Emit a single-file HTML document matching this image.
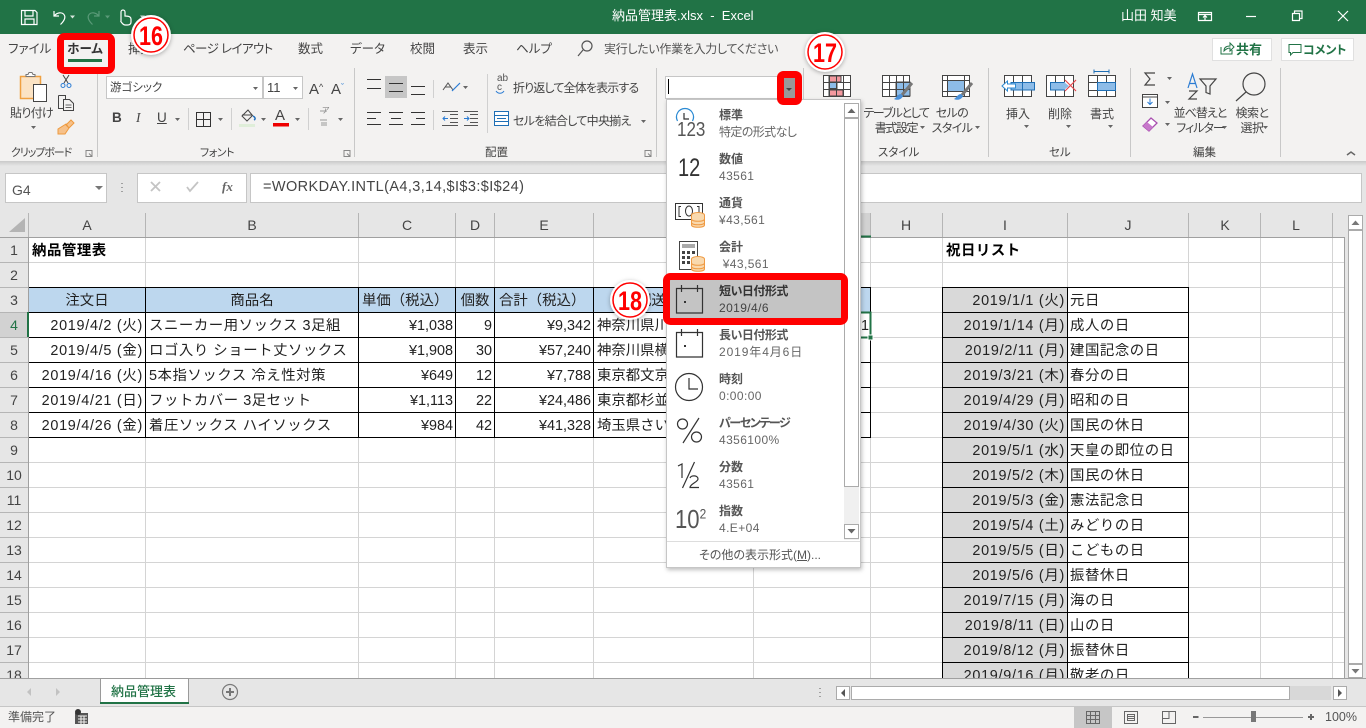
<!DOCTYPE html>
<html lang="ja"><head><meta charset="utf-8"><title>納品管理表.xlsx - Excel</title>
<style>
html,body{margin:0;padding:0;width:1366px;height:728px;overflow:hidden;background:#fff}
body{position:relative;font-family:"Liberation Sans","Noto Sans CJK JP",sans-serif;color:#444}
div,span,svg{position:absolute}
svg{left:0;top:0}
.t{white-space:nowrap;font-size:12px;line-height:16px;font-feature-settings:"palt";color:#444}
.c{text-align:center;transform:translateX(-50%)}
.r{left:0;width:1366px;height:25px}
.r span{white-space:nowrap;font-size:14.4px;line-height:25px;color:#222;top:2px}
.r span[style*="right:1223px"],.r span[style*="right:301px"]{letter-spacing:.72px}
.r span[style*="left:149px"],.r span[style*="left:1070px"],.r span[style*="left:32px"],.r span[style*="left:946px"]{letter-spacing:.55px}
.m b,.m i{position:absolute;left:52px;white-space:nowrap;font-style:normal;font-size:12px;line-height:16px;color:#555;font-feature-settings:"palt"}
.m b{top:6px;font-weight:bold}
.m i{top:23px;color:#666;letter-spacing:.4px}
.m{left:0;width:195px;height:44px}
.h{font-size:14px;color:#444;line-height:24px;top:213px;white-space:nowrap;transform:translateX(-50%)}
.n{font-size:14px;color:#444;line-height:25px;left:0;width:28px;text-align:center;margin-top:1px}
</style></head><body>
<!-- chrome backgrounds -->
<div style="left:0;top:0;width:1366px;height:34px;background:#217346"></div>
<div style="left:0;top:34px;width:1366px;height:127px;background:#f3f2f1"></div>
<div style="left:0;top:161px;width:1366px;height:52px;background:#e6e6e6"></div>
<div style="left:0;top:161px;width:1366px;height:5px;background:linear-gradient(#c9c9c9,#e6e6e6)"></div>
<div style="left:5px;top:173px;width:100px;height:28px;background:#fff;border:1px solid #c6c6c6"></div>
<div style="left:137px;top:173px;width:108px;height:28px;background:#fff;border:1px solid #c6c6c6"></div>
<div style="left:250px;top:173px;width:1110px;height:28px;background:#fff;border:1px solid #c6c6c6"></div>

<svg width="1366" height="728" viewBox="0 0 1366 728" fill="none">
<!-- grid -->
<rect x="0" y="213" width="1344" height="24" fill="#e6e6e6"/>
<rect x="0" y="237" width="28" height="441" fill="#e6e6e6"/>
<rect x="1344" y="213" width="22" height="465" fill="#e6e6e6"/>
<rect x="29" y="288" width="841" height="24" fill="#bdd7ee"/>
<rect x="943" y="288" width="124" height="390" fill="#d9d9d9"/>
<rect x="0" y="312" width="28" height="25" fill="#d2d2d2"/>
<rect x="753" y="213" width="117" height="24" fill="#d2d2d2"/>
<g stroke="#d4d4d4" stroke-width="1">
<path d="M28.5 262.5H1344M28.5 287.5H1344M28.5 312.5H1344M28.5 337.5H1344M28.5 362.5H1344M28.5 387.5H1344M28.5 412.5H1344M28.5 437.5H1344M28.5 462.5H1344M28.5 487.5H1344M28.5 512.5H1344M28.5 537.5H1344M28.5 562.5H1344M28.5 587.5H1344M28.5 612.5H1344M28.5 637.5H1344M28.5 662.5H1344"/>
<path d="M145.5 237V678M358.5 237V678M455.5 237V678M494.5 237V678M593.5 237V678M753.5 237V678M870.5 237V678M942.5 237V678M1067.5 237V678M1188.5 237V678M1260.5 237V678M1332.5 237V678"/>
</g>
<g stroke="#b5b5b5"><path d="M28.5 213V237M145.5 213V237M358.5 213V237M455.5 213V237M494.5 213V237M593.5 213V237M753.5 213V237M870.5 213V237M942.5 213V237M1067.5 213V237M1188.5 213V237M1260.5 213V237M1332.5 213V237"/>
<path d="M0 262.5H28M0 287.5H28M0 312.5H28M0 337.5H28M0 362.5H28M0 387.5H28M0 412.5H28M0 437.5H28M0 462.5H28M0 487.5H28M0 512.5H28M0 537.5H28M0 562.5H28M0 587.5H28M0 612.5H28M0 637.5H28M0 662.5H28"/></g>
<path d="M0 237.5H1344M28.5 237V678M1344.5 237V678" stroke="#a0a0a0"/>
<path d="M25 218V232H9Z" fill="#b4b4b4"/>
<!-- black tables -->
<g stroke="#000">
<path d="M29 287.5H870M29 312.5H870M29 337.5H870M29 362.5H870M29 387.5H870M29 412.5H870M29 437.5H870"/>
<path d="M145.5 287V438M358.5 287V438M455.5 287V438M494.5 287V438M593.5 287V438M870.5 287V438"/>
<path d="M942.5 287V678M1067.5 287V678M1188.5 287V678"/>
<path d="M942 287.5H1189M942 312.5H1189M942 337.5H1189M942 362.5H1189M942 387.5H1189M942 412.5H1189M942 437.5H1189M942 462.5H1189M942 487.5H1189M942 512.5H1189M942 537.5H1189M942 562.5H1189M942 587.5H1189M942 612.5H1189M942 637.5H1189M942 662.5H1189"/>
</g>
<!-- selection -->
<rect x="753" y="312.5" width="117.5" height="25" stroke="#217346" stroke-width="2"/>
<rect x="868" y="335" width="5" height="5" fill="#217346" stroke="#fff"/>
<path d="M28 312V337" stroke="#217346" stroke-width="2"/>
<path d="M753 236.5H871" stroke="#217346" stroke-width="2"/>
<!-- v scrollbar -->
<rect x="1348.5" y="215.5" width="14" height="14" fill="#fff" stroke="#ababab"/>
<rect x="1348.5" y="230.5" width="14" height="433" fill="#fff" stroke="#ababab"/>
<rect x="1348.5" y="664.5" width="14" height="13" fill="#fff" stroke="#ababab"/>
<path d="M1351.5 225H1359.5L1355.5 220.5Z" fill="#777"/><path d="M1351.5 669H1359.5L1355.5 673.5Z" fill="#777"/>
<!-- bottom bar -->
<rect x="0" y="678" width="1366" height="28" fill="#e6e6e6"/>
<path d="M0 678.5H1366" stroke="#a0a0a0"/><path d="M0 706.5H1366" stroke="#c6c6c6"/>
<rect x="0" y="707" width="1366" height="21" fill="#f3f2f1"/>
<rect x="100.5" y="678.5" width="88" height="25" fill="#fff" stroke="#9a9a9a"/>
<path d="M100 703H189" stroke="#217346" stroke-width="2"/>
<path d="M31 688V696L27 692Z" fill="#c2c2c2"/><path d="M56 688V696L60 692Z" fill="#c2c2c2"/>
<circle cx="230" cy="692" r="7.5" stroke="#7a7a7a" stroke-width="1.2"/><path d="M226 692H234M230 688V696" stroke="#777" stroke-width="2"/>
<path d="M820 688V689M820 692V693M820 696V697" stroke="#888" stroke-width="1.5"/>
<rect x="836.5" y="686.5" width="13" height="13" fill="#fff" stroke="#ababab"/><path d="M845 689V697L841 693Z" fill="#555"/>
<rect x="851.5" y="686.5" width="438" height="13" fill="#fff" stroke="#ababab"/>
<rect x="1290" y="686" width="41" height="14" fill="#d8d8d8"/>
<rect x="1333.5" y="686.5" width="13" height="13" fill="#fff" stroke="#ababab"/><path d="M1338 689V697L1342 693Z" fill="#555"/>
<!-- status icons -->
<path d="M75 713h13v11h-13z" fill="#555"/><circle cx="78" cy="712" r="3" fill="#333"/>
<path d="M78 716H87M78 719H87M78 722H87M81 716V724M84 716V724" stroke="#f3f2f1"/>
<rect x="1074" y="707" width="38" height="21" fill="#c6c6c6"/>
<path d="M1086.5 711.5h13v12h-13zM1090.5 711.5v12M1095.5 711.5v12M1086.5 715.5h13M1086.5 719.5h13" stroke="#666"/>
<path d="M1124.5 711.5h13v12h-13zM1127.5 714.5h7v6h-7zM1128 716.5h6M1128 718.5h6" stroke="#666"/>
<path d="M1162.5 711.5h13v12h-13zM1162.5 718.5h6.5v-7" stroke="#666"/>
<path d="M1193 717H1198.5" stroke="#666" stroke-width="2"/>
<path d="M1203 717.5H1303" stroke="#999"/>
<rect x="1251" y="711" width="5" height="11" fill="#777"/>
<path d="M1308 717H1314M1311 714V720" stroke="#666" stroke-width="2"/>

<!-- title icons -->
<g stroke="#fff" stroke-width="1.2">
<path d="M21.5 10.5h13.5l2 2v12h-15.5zM25 10.5v5.5h8v-5.5M25 24.5v-5.5h9v5.5"/>
<path d="M54 11v5h5M54.5 15.5c3-3 7-3.5 9-1.500 2.500 2.500 1.500 6-3 10.500"/>
<path d="M1198.500 12.500h13v8h-13zM1198.500 14.500h13M1205 20v-4M1203 17.500l2-2 2 2"/>
<path d="M1246 16.500h10"/>
<path d="M1292.500 13.500h7v7h-7zM1294.500 13v-2h7.500v7.500h-2"/>
<path d="M1338 11l10 10M1348 11l-10 10"/>
</g>
<path d="M70 15.500h5l-2.500 3zM140 15.500h5l-2.500 3" fill="#d8e6dd"/>
<path d="M105 15.500h5l-2.500 3" fill="#5a9a78"/>
<g stroke="#5a9a78" stroke-width="1.2"><path d="M99 11v5h-5M98.500 15.500c-3-3-7-3.500-9-1.500-2.500 2.500-1.500 6 3 10.500"/></g>
<path d="M121 21v-9a2 2 0 0 1 4 0v4c3 0 6 .5 6 3v3c0 2-1.500 3-3.500 3h-2.500c-2 0-3-2-4.500-4" stroke="#fff" stroke-width="1.200"/>

<!-- ribbon separators -->
<path d="M97.500 68V157M354.500 68V157M656.500 68V157M803.500 68V157M988.500 68V157M1130.500 68V157M1280.500 68V157" stroke="#c8c8c8"/>
<path d="M487.500 74V133M433.500 80V98M433.500 110V130M188.500 108V130M231.500 108V130M308.500 108V130" stroke="#d0d0d0"/>
<!-- clipboard -->
<rect x="20.500" y="76.500" width="20" height="22" fill="#fbe3c4" stroke="#f0a040" stroke-width="1.500"/>
<path d="M26 76.500h9v-2h-2l-1-2h-3l-1 2h-2z" fill="#fff" stroke="#777"/>
<rect x="33.500" y="84.500" width="13" height="17" fill="#fff" stroke="#444"/>
<path d="M63 75l5 8M69 75l-5 8" stroke="#444"/><circle cx="63" cy="85.500" r="2" stroke="#2b7cd3"/><circle cx="69" cy="85.500" r="2" stroke="#2b7cd3"/>
<path d="M58.500 95.500h7v4M58.500 95.500v13h4.500M63.500 99.500h6l4 4v7h-10z" stroke="#444"/><path d="M65.500 105h6M65.500 107.500h6" stroke="#666"/>
<path d="M66 125l5-5 3 3-5 5zM58 129l8-5 3 4-4 6h-7z" fill="#f6c18a" stroke="#ee9a3e"/>
<!-- font boxes -->
<rect x="106.500" y="76.500" width="156" height="22" fill="#fff" stroke="#c6c6c6"/>
<rect x="263.500" y="76.500" width="39" height="22" fill="#fff" stroke="#c6c6c6"/>
<path d="M253 87h5l-2.500 3zM293 87h5l-2.500 3" fill="#666"/>
<path d="M31 126h5l-2.500 3zM175 118h5l-2.500 3zM218 118h5l-2.500 3zM261 118h5l-2.500 3zM295 118h5l-2.500 3zM338 118h5l-2.500 3z" fill="#666"/>
<path d="M196.500 112.500h14v14h-14zM203.500 112.500v14M196.500 119.500h14" stroke="#333"/>
<path d="M248 110l-6 6 5 5 5.500-5.500zM242 115h10" stroke="#444"/><path d="M253 116c2 1 3 3 1 4" stroke="#1f6fbf" stroke-width="1.500"/>
<rect x="239" y="124" width="16" height="3" fill="#dfeed9"/>
<rect x="273" y="123" width="16" height="3.500" fill="#e00"/>
<path d="M320 111h7M320 120h7M321 123h6M321 125h6" stroke="#999"/>
<!-- align -->
<rect x="385" y="76" width="22" height="22" fill="#c6c6c6"/>
<g stroke="#333"><path d="M367 79.500h14M367 88.500h14"/><path d="M389 83.500h14M389 91.500h14"/><path d="M411 86.500h14M411 94.500h14"/>
<path d="M367 112.500h14M367 118.500h9M367 124.500h14"/><path d="M389 112.500h14M391 118.500h10M389 124.500h14"/><path d="M411 112.500h14M416 118.500h9M411 124.500h14"/>
<path d="M450 114.500h8M450 118.500h8M450 122.500h8M442 125.500h16M442 111.500h16" stroke="#555"/><path d="M470 114.500h8M470 118.500h8M470 122.500h8M464 125.500h14M464 111.500h14" stroke="#555"/></g>
<path d="M448 118.500h-5m2-2l-2 2 2 2M464 118.500h5m-2-2l2 2-2 2" stroke="#2b7cd3"/>
<path d="M443 90l5-7 5 7M445 87h6" stroke="#555"/><path d="M452 91l8-8" stroke="#2b7cd3" stroke-width="1.200"/><path d="M463 86h5l-2.500 3zM641 120h5l-2.500 3" fill="#666"/>
<path d="M496 91c2 3 6 3 8 0" stroke="#2b7cd3"/>
<rect x="494.500" y="111.500" width="14" height="14" fill="#fff" stroke="#1f6fb5"/><path d="M494.500 115.500h14M494.500 121.500h14" stroke="#1f6fb5"/><path d="M497 118.500h9" stroke="#1f6fb5"/>
<!-- number box -->
<rect x="665.500" y="76.500" width="125" height="22" fill="#fff" stroke="#c6c6c6"/>
<path d="M668.500 79v15" stroke="#000"/>
<!-- style icons -->
<g stroke="#444">
<rect x="823.500" y="75.500" width="27" height="21" fill="#fff"/>
<rect x="829" y="76" width="12" height="6" fill="#f4999f"/><rect x="829" y="82.500" width="8" height="6" fill="#8dbce8"/><rect x="829" y="90" width="14" height="6" fill="#f4999f"/>
<path d="M829.500 75.500v21M836.500 75.500v21M843.500 75.500v21M823.500 82.500h27M823.500 89.500h27"/>
<rect x="882.500" y="75.500" width="27" height="21" fill="#fff"/>
<rect x="896" y="82" width="14" height="14" fill="#8dbce8"/>
<path d="M889.500 75.500v21M896.500 75.500v21M903.500 75.500v21M882.500 82.500h27M882.500 89.500h27"/>
<rect x="942.500" y="75.500" width="27" height="21" fill="#fff"/>
<rect x="947.500" y="80.500" width="17" height="11" fill="#8dbce8" stroke="#1f6fb5"/>
<path d="M947.500 75.500v21M964.500 75.500v21M942.500 80.500h27M942.500 91.500h27"/>
</g>
<path d="M912 83l-10 12M972 83l-10 12" stroke="#777" stroke-width="3"/><path d="M901 94c-3 0-4 3-7 5 4 2 8 0 9-3zM961 94c-3 0-4 3-7 5 4 2 8 0 9-3z" fill="#4a90d9"/>
<!-- cells icons -->
<g stroke="#444">
<rect x="1004.500" y="75.500" width="27" height="21" fill="#fff"/><path d="M1013.500 75.500v21M1022.500 75.500v21"/>
<rect x="1046.500" y="75.500" width="27" height="21" fill="#fff"/><path d="M1055.500 75.500v21M1064.500 75.500v21"/>
<rect x="1088.500" y="75.500" width="27" height="21" fill="#fff"/><path d="M1097.500 75.500v21M1106.500 75.500v21M1088.500 82.500h27M1088.500 90.500h27"/>
</g>
<rect x="1011" y="82.500" width="23.500" height="7.500" fill="#8dbce8" stroke="#1f6fb5"/><path d="M1022.500 82.500v7.500" stroke="#1f6fb5"/>
<path d="M1002 86l5.500-5v3h8v4h-8v3z" fill="#fff" stroke="#2b8ad3"/>
<rect x="1050.500" y="82.500" width="14" height="7.500" fill="#8dbce8" stroke="#1f6fb5"/>
<path d="M1064 82l5 4-5 4z" fill="#8dbce8"/>
<path d="M1065 80l11 11M1076 80l-11 11" stroke="#e8484d" stroke-width="1.200"/>
<rect x="1088.500" y="82.500" width="27" height="8" fill="#fff" stroke="#444"/><rect x="1097.500" y="82.500" width="18" height="8" fill="#8dbce8" stroke="#1f6fb5"/>
<path d="M1094 71.500h15M1094 69.500v4M1109 69.500v4" stroke="#1f6fb5"/>
<!-- editing icons -->
<path d="M1155 73h-10l5 6-5 6h10" stroke="#444" stroke-width="1.200"/>
<rect x="1142.500" y="94.500" width="15" height="13" fill="#fff" stroke="#444"/><path d="M1142.500 97h15" stroke="#444"/><path d="M1150 98.500v6m-2.500-2.500l2.500 2.500 2.500-2.500" stroke="#2b7cd3"/>
<path d="M1143 126l8-8 6 5-8 8z" fill="#fff" stroke="#a94fb0" stroke-width="1.300"/><path d="M1143 126l4-4 6 5-4 4z" fill="#c778cb"/>
<path d="M1167 77h5l-2.500 3zM1165 101h5l-2.500 3zM1165 123h5l-2.500 3zM1024 125h5l-2.500 3zM1066 125h5l-2.500 3zM1108 125h5l-2.500 3zM1222 126h5l-2.500 3zM1263 126h5l-2.500 3zM920 126h5l-2.500 3zM975 126h5l-2.500 3z" fill="#666"/>
<path d="M1188 88l4.500-14 4.500 14M1189.500 83.500h6" stroke="#2b7cd3" stroke-width="1.200"/>
<path d="M1189 91h8l-8 8h8" stroke="#444" stroke-width="1.200"/>
<path d="M1200 79h16l-6 7v8l-4-1.500v-6.500z" stroke="#444" stroke-width="1.200"/>
<circle cx="1254" cy="84" r="11" stroke="#444" stroke-width="1.200"/><path d="M1246 92l-10 9" stroke="#444" stroke-width="1.200"/>
<path d="M1347 155l4-3 4 3" stroke="#666" stroke-width="1.500"/>
<g stroke="#888"><path d="M86 150.500h6v6h-6zM89 153.500l3 3M344 150.500h6v6h-6zM347 153.500l3 3M645 150.500h6v6h-6zM648 153.500l3 3"/></g>
<!-- search, share -->
<circle cx="587" cy="46" r="5" stroke="#555" stroke-width="1.200"/><path d="M583 50l-5 6" stroke="#555" stroke-width="1.200"/>
<rect x="1212.500" y="38.500" width="59" height="22" fill="#fff" stroke="#e0e0e0"/>
<rect x="1281.500" y="38.500" width="72" height="22" fill="#fff" stroke="#e0e0e0"/>
<path d="M1221 47v7h11v-4M1224 51c0-4 3-5 6-5v-3l4 4-4 4v-3c-2 0-4 1-6 3z" stroke="#217346"/>
<path d="M1289 44.500h12v8h-8l-2.500 2.500v-2.500h-1.500z" stroke="#217346"/>
<!-- formula -->
<path d="M95 186h8l-4 4z" fill="#777"/>
<path d="M122 183v1M122 187v1M122 191v1" stroke="#888" stroke-width="1.500"/>
<path d="M151 182l9 9M160 182l-9 9M187 187l3 4 8-9" stroke="#c4c4c4" stroke-width="1.800"/>
</svg>

<!-- ribbon text -->
<div class="t" style="left:8px;top:41px;font-size:12.500px">ファイル</div>
<div class="t" style="left:128px;top:41px;font-size:12.500px">挿入</div>
<div class="t" style="left:183px;top:41px;font-size:12.500px;letter-spacing:-.6px">ページ レイアウト</div>
<div class="t" style="left:298px;top:41px;font-size:12.500px">数式</div>
<div class="t" style="left:350px;top:41px;font-size:12.500px">データ</div>
<div class="t" style="left:410px;top:41px;font-size:12.500px">校閲</div>
<div class="t" style="left:463px;top:41px;font-size:12.500px">表示</div>
<div class="t" style="left:516px;top:41px;font-size:12.500px">ヘルプ</div>
<div class="t" style="left:604px;top:41px;font-size:12px;color:#555;letter-spacing:-.3px">実行したい作業を入力してください</div>
<div class="t" style="left:612px;top:8px;color:#fff;font-size:13px">納品管理表.xlsx&nbsp; -&nbsp; Excel</div>
<div class="t" style="left:1121px;top:8px;color:#fff;font-size:13px">山田 知美</div>
<div class="t" style="left:1236px;top:42px;color:#217346;font-weight:bold;font-size:13px">共有</div>
<div class="t" style="left:1303px;top:42px;color:#217346;font-weight:bold;font-size:12px">コメント</div>
<div class="t" style="left:10px;top:105px;letter-spacing:-.7px">貼り付け</div>
<div class="t" style="left:11px;top:145px;font-size:11px;letter-spacing:-1.100px">クリップボード</div>
<div class="t" style="left:200px;top:145px;font-size:11px;letter-spacing:-.5px">フォント</div>
<div class="t" style="left:485px;top:145px;font-size:11.500px">配置</div>
<div class="t" style="left:878px;top:145px;font-size:11.500px">スタイル</div>
<div class="t" style="left:1049px;top:145px;font-size:11.500px">セル</div>
<div class="t" style="left:1193px;top:145px;font-size:11.500px">編集</div>
<div class="t" style="left:110px;top:80px;font-size:11.500px">游ゴシック</div>
<div class="t" style="left:267px;top:80px;font-size:13px">11</div>
<div class="t" style="left:309px;top:79px;font-size:15px">A<span style="position:static;font-size:9px;vertical-align:4px">^</span></div>
<div class="t" style="left:331px;top:79px;font-size:15px">A<span style="position:static;font-size:9px;vertical-align:4px;color:#2b7cd3">ˇ</span></div>
<div class="t" style="left:112px;top:110px;font-size:13.500px;font-weight:bold">B</div>
<div class="t" style="left:136px;top:110px;font-size:13.500px;font-style:italic;font-family:'Liberation Serif',serif">I</div>
<div class="t" style="left:157px;top:110px;font-size:13.500px;text-decoration:underline">U</div>
<div class="t" style="left:275px;top:108px;font-size:15px">A</div>
<div class="t" style="left:322px;top:103px;font-size:8px;color:#888">ア</div>
<div class="t" style="left:497px;top:74px;font-size:10px;line-height:9px;color:#555">ab<br>c</div>
<div class="t" style="left:513px;top:80px;font-size:12px;letter-spacing:-.85px">折り返して全体を表示する</div>
<div class="t" style="left:513px;top:113px;font-size:12px;letter-spacing:-.7px">セルを結合して中央揃え</div>
<div class="t c" style="left:896px;top:106px;font-size:12px;line-height:15px;letter-spacing:-1.400px">テーブルとして<br>書式設定</div>
<div class="t c" style="left:952px;top:106px;font-size:12px;line-height:15px;letter-spacing:-.6px">セルの<br>スタイル</div>
<div class="t c" style="left:1018px;top:106px">挿入</div>
<div class="t c" style="left:1060px;top:106px">削除</div>
<div class="t c" style="left:1102px;top:106px">書式</div>
<div class="t c" style="left:1200px;top:106px;line-height:15px;letter-spacing:-1px">並べ替えと<br>フィルター</div>
<div class="t c" style="left:1252px;top:106px;line-height:15px;letter-spacing:-.5px">検索と<br>選択</div>

<!-- formula bar -->
<div class="t" style="left:12px;top:182px;font-size:14px;color:#555">G4</div>
<div class="t" style="left:222px;top:179px;font-size:13px;font-style:italic;font-weight:bold;font-family:'Liberation Serif',serif;color:#666">fx</div>
<div class="t" style="left:263px;top:179px;font-size:14.500px;letter-spacing:.4px;color:#444;font-feature-settings:normal">=WORKDAY.INTL(A4,3,14,$I$3:$I$24)</div>

<!-- column headers -->
<span class="h" style="left:87px">A</span><span class="h" style="left:252px">B</span><span class="h" style="left:407px">C</span><span class="h" style="left:475px">D</span><span class="h" style="left:544px">E</span><span class="h" style="left:673px">F</span><span class="h" style="left:812px">G</span><span class="h" style="left:906px">H</span><span class="h" style="left:1005px">I</span><span class="h" style="left:1128px">J</span><span class="h" style="left:1225px">K</span><span class="h" style="left:1296px">L</span>
<!-- row numbers -->
<span class="n" style="top:237px">1</span><span class="n" style="top:262px">2</span><span class="n" style="top:287px">3</span><span class="n" style="top:312px;color:#217346">4</span><span class="n" style="top:337px">5</span><span class="n" style="top:362px">6</span><span class="n" style="top:387px">7</span><span class="n" style="top:412px">8</span><span class="n" style="top:437px">9</span><span class="n" style="top:462px">10</span><span class="n" style="top:487px">11</span><span class="n" style="top:512px">12</span><span class="n" style="top:537px">13</span><span class="n" style="top:562px">14</span><span class="n" style="top:587px">15</span><span class="n" style="top:612px">16</span><span class="n" style="top:637px">17</span><span class="n" style="top:662px;height:15px;overflow:hidden">18</span>

<!-- cells -->
<div class="r" style="top:237px"><span style="left:32px;font-weight:bold;color:#000">納品管理表</span><span style="left:946px;font-weight:bold;color:#000">祝日リスト</span></div>
<div class="r" style="top:287px"><span style="left:87px;transform:translateX(-50%)">注文日</span><span style="left:252px;transform:translateX(-50%)">商品名</span><span style="left:362px">単価（税込）</span><span style="left:475px;transform:translateX(-50%)">個数</span><span style="left:499px">合計（税込）</span><span style="left:673px;transform:translateX(-50%)">配送先住所</span><span style="right:301px">2019/1/1 (火)</span><span style="left:1070px">元日</span></div>
<div class="r" style="top:312px"><span style="right:1223px">2019/4/2 (火)</span><span style="left:149px">スニーカー用ソックス 3足組</span><span style="right:913px">¥1,038</span><span style="right:874px">9</span><span style="right:775px">¥9,342</span><span style="left:597px">神奈川県川崎市</span><span style="right:497px">1</span><span style="right:301px">2019/1/14 (月)</span><span style="left:1070px">成人の日</span></div>
<div class="r" style="top:337px"><span style="right:1223px">2019/4/5 (金)</span><span style="left:149px">ロゴ入り ショート丈ソックス</span><span style="right:913px">¥1,908</span><span style="right:874px">30</span><span style="right:775px">¥57,240</span><span style="left:597px">神奈川県横浜市</span><span style="right:301px">2019/2/11 (月)</span><span style="left:1070px">建国記念の日</span></div>
<div class="r" style="top:362px"><span style="right:1223px">2019/4/16 (火)</span><span style="left:149px">5本指ソックス 冷え性対策</span><span style="right:913px">¥649</span><span style="right:874px">12</span><span style="right:775px">¥7,788</span><span style="left:597px">東京都文京区</span><span style="right:301px">2019/3/21 (木)</span><span style="left:1070px">春分の日</span></div>
<div class="r" style="top:387px"><span style="right:1223px">2019/4/21 (日)</span><span style="left:149px">フットカバー 3足セット</span><span style="right:913px">¥1,113</span><span style="right:874px">22</span><span style="right:775px">¥24,486</span><span style="left:597px">東京都杉並区</span><span style="right:301px">2019/4/29 (月)</span><span style="left:1070px">昭和の日</span></div>
<div class="r" style="top:412px"><span style="right:1223px">2019/4/26 (金)</span><span style="left:149px">着圧ソックス ハイソックス</span><span style="right:913px">¥984</span><span style="right:874px">42</span><span style="right:775px">¥41,328</span><span style="left:597px">埼玉県さいたま</span><span style="right:301px">2019/4/30 (火)</span><span style="left:1070px">国民の休日</span></div>
<div class="r" style="top:437px"><span style="right:301px">2019/5/1 (水)</span><span style="left:1070px">天皇の即位の日</span></div>
<div class="r" style="top:462px"><span style="right:301px">2019/5/2 (木)</span><span style="left:1070px">国民の休日</span></div>
<div class="r" style="top:487px"><span style="right:301px">2019/5/3 (金)</span><span style="left:1070px">憲法記念日</span></div>
<div class="r" style="top:512px"><span style="right:301px">2019/5/4 (土)</span><span style="left:1070px">みどりの日</span></div>
<div class="r" style="top:537px"><span style="right:301px">2019/5/5 (日)</span><span style="left:1070px">こどもの日</span></div>
<div class="r" style="top:562px"><span style="right:301px">2019/5/6 (月)</span><span style="left:1070px">振替休日</span></div>
<div class="r" style="top:587px"><span style="right:301px">2019/7/15 (月)</span><span style="left:1070px">海の日</span></div>
<div class="r" style="top:612px"><span style="right:301px">2019/8/11 (日)</span><span style="left:1070px">山の日</span></div>
<div class="r" style="top:637px"><span style="right:301px">2019/8/12 (月)</span><span style="left:1070px">振替休日</span></div>
<div class="r" style="top:662px;height:16px;overflow:hidden"><span style="right:301px">2019/9/16 (月)</span><span style="left:1070px">敬老の日</span></div>

<div class="t" style="left:111px;top:684px;font-size:13px;color:#217346;font-feature-settings:normal;font-weight:500">納品管理表</div>
<div class="t" style="left:8px;top:709px;font-size:12px;color:#555">準備完了</div>
<div class="t" style="left:1325px;top:709px;font-size:12.500px;color:#555">100%</div>

<!-- dropdown -->
<div style="left:666px;top:99px;width:195px;height:469px;background:#fff;border:1px solid #c6c6c6;box-sizing:border-box;box-shadow:1px 2px 4px rgba(0,0,0,.25)">
<div class="m" style="top:1px"><b>標準</b><i style="letter-spacing:-.6px">特定の形式なし</i></div>
<div class="m" style="top:45px"><b>数値</b><i>43561</i></div>
<div class="m" style="top:89px"><b>通貨</b><i>¥43,561</i></div>
<div class="m" style="top:133px"><b>会計</b><i>&nbsp;¥43,561</i></div>
<div style="left:3px;top:180px;width:172px;height:39px;background:#c4c4c4"></div>
<div class="m" style="top:177px"><b style="color:#333;letter-spacing:-.5px">短い日付形式</b><i style="color:#444">2019/4/6</i></div>
<div class="m" style="top:221px"><b style="letter-spacing:-.5px">長い日付形式</b><i style="letter-spacing:.9px">2019年4月6日</i></div>
<div class="m" style="top:265px"><b>時刻</b><i>0:00:00</i></div>
<div class="m" style="top:309px"><b style="letter-spacing:-1.400px">パーセンテージ</b><i>4356100%</i></div>
<div class="m" style="top:353px"><b>分数</b><i>43561</i></div>
<div class="m" style="top:397px"><b>指数</b><i>4.E+04</i></div>
<div class="t c" style="left:93px;top:447px;color:#555">その他の表示形式(<u>M</u>)...</div>
<span style="left:10px;top:20px;font-size:20px;line-height:20px;color:#555;transform:scaleX(.85);transform-origin:0 0">123</span>
<span style="left:11px;top:55px;font-size:25px;line-height:26px;color:#333;transform:scaleX(.8);transform-origin:0 0">12</span>
<span style="left:8px;top:404px;font-size:26px;line-height:30px;color:#555;transform:scaleX(.85);transform-origin:0 0">10<sup style="font-size:14px;line-height:0">2</sup></span>
</div>
<svg width="1366" height="728" viewBox="0 0 1366 728" fill="none">
<!-- dropdown scrollbar -->
<rect x="844" y="118" width="15" height="422" fill="#f0f0f0"/>
<rect x="844.500" y="103.500" width="14" height="14" fill="#fff" stroke="#ababab"/>
<rect x="844.500" y="118.500" width="14" height="368" fill="#fff" stroke="#ababab"/>
<rect x="844.500" y="524.500" width="14" height="14" fill="#fff" stroke="#ababab"/>
<path d="M847.500 113h8l-4-4.500zM847.500 529h8l-4 4.500z" fill="#666"/>
<path d="M667 541.500H860" stroke="#ddd"/>
<!-- menu icons -->
<path d="M677.500 121a8.500 8.500 0 1 1 15 0" stroke="#2b8ad3" stroke-width="1.200"/><path d="M684 113v6h5" stroke="#333" stroke-width="1.200"/>
<g stroke="#333"><path d="M675.500 203.500h27v16h-27z"/><path d="M681 206.500h-2v10h2M697 206.500h2v10h-2"/><ellipse cx="689" cy="211" rx="3.500" ry="5"/>
<rect x="679.500" y="241.500" width="18" height="28" stroke="#444"/><rect x="682" y="244" width="13" height="4" fill="#aaa" stroke="none"/></g>
<g fill="#444"><rect x="682" y="251" width="3" height="3"/><rect x="687" y="251" width="3" height="3"/><rect x="692" y="251" width="3" height="3"/><rect x="682" y="256" width="3" height="3"/><rect x="687" y="256" width="3" height="3"/><rect x="682" y="261" width="3" height="3"/><rect x="687" y="261" width="3" height="3"/></g>
<g fill="#f9d9ae" stroke="#ef9a43"><ellipse cx="698" cy="215" rx="6.500" ry="2.500"/><path d="M691.500 215v10c0 3 13 3 13 0v-10"/><path d="M691.500 219c0 3 13 3 13 0M691.500 222.500c0 3 13 3 13 0" fill="none"/>
<ellipse cx="698" cy="259" rx="6.500" ry="2.500"/><path d="M691.500 259v10c0 3 13 3 13 0v-10"/><path d="M691.500 263c0 3 13 3 13 0M691.500 266.500c0 3 13 3 13 0" fill="none"/></g>
<g stroke="#333" stroke-width="1.200">
<path d="M676.500 288.500h26v24.500h-26zM681.500 285v7M697.500 285v7"/>
<path d="M676.500 332.500h26v24.500h-26zM681.500 329v7M697.500 329v7"/>
<circle cx="689" cy="387" r="13.500"/><path d="M689 378v11h9"/>
<circle cx="682.500" cy="424" r="5"/><circle cx="696.500" cy="437" r="5"/><path d="M699 418l-16 25"/>
<path d="M678 466l4-2v14M682.500 488l12-26M690 478c1-3 8-3 8 1 0 3-8 5-8 8.500h9"/>
</g>
<rect x="684" y="301" width="2" height="2" fill="#333"/><rect x="684" y="345" width="2" height="2" fill="#333"/>
<!-- red highlights -->
<rect x="60.500" y="36.500" width="51" height="34" rx="4" fill="#f3f2f1" stroke="#f00" stroke-width="7"/>
<path d="M68 60.500H102" stroke="#217346" stroke-width="3"/>
<rect x="780.500" y="74.500" width="18" height="27" rx="3" fill="#999" stroke="#f00" stroke-width="7"/>
<path d="M786 88h6l-3 3z" fill="#444"/>
<rect x="666.500" y="276.500" width="178" height="45" rx="4" stroke="#f00" stroke-width="7"/>
<!-- badges -->
<g>
<circle cx="151" cy="35" r="20" fill="#fff" style="filter:drop-shadow(0 1px 2px rgba(0,0,0,.3))"/><circle cx="151" cy="35" r="17" fill="#fff" stroke="#f00" stroke-width="1.500"/>
<circle cx="825" cy="52" r="20" fill="#fff" style="filter:drop-shadow(0 1px 2px rgba(0,0,0,.3))"/><circle cx="825" cy="52" r="17" fill="#fff" stroke="#f00" stroke-width="1.500"/>
<circle cx="630" cy="300" r="20" fill="#fff" style="filter:drop-shadow(0 1px 2px rgba(0,0,0,.3))"/><circle cx="630" cy="300" r="17" fill="#fff" stroke="#f00" stroke-width="1.500"/>
</g>
<g fill="#f00" font-family="Liberation Sans, sans-serif" font-weight="bold" font-size="27" text-anchor="middle">
<text x="151" y="45" textLength="24" lengthAdjust="spacingAndGlyphs">16</text>
<text x="825" y="62" textLength="24" lengthAdjust="spacingAndGlyphs">17</text>
<text x="630" y="310" textLength="24" lengthAdjust="spacingAndGlyphs">18</text>
</g>
</svg>
<div class="t c" style="left:85px;top:41px;font-size:12.500px;font-weight:bold;color:#333">ホーム</div>
</body></html>
